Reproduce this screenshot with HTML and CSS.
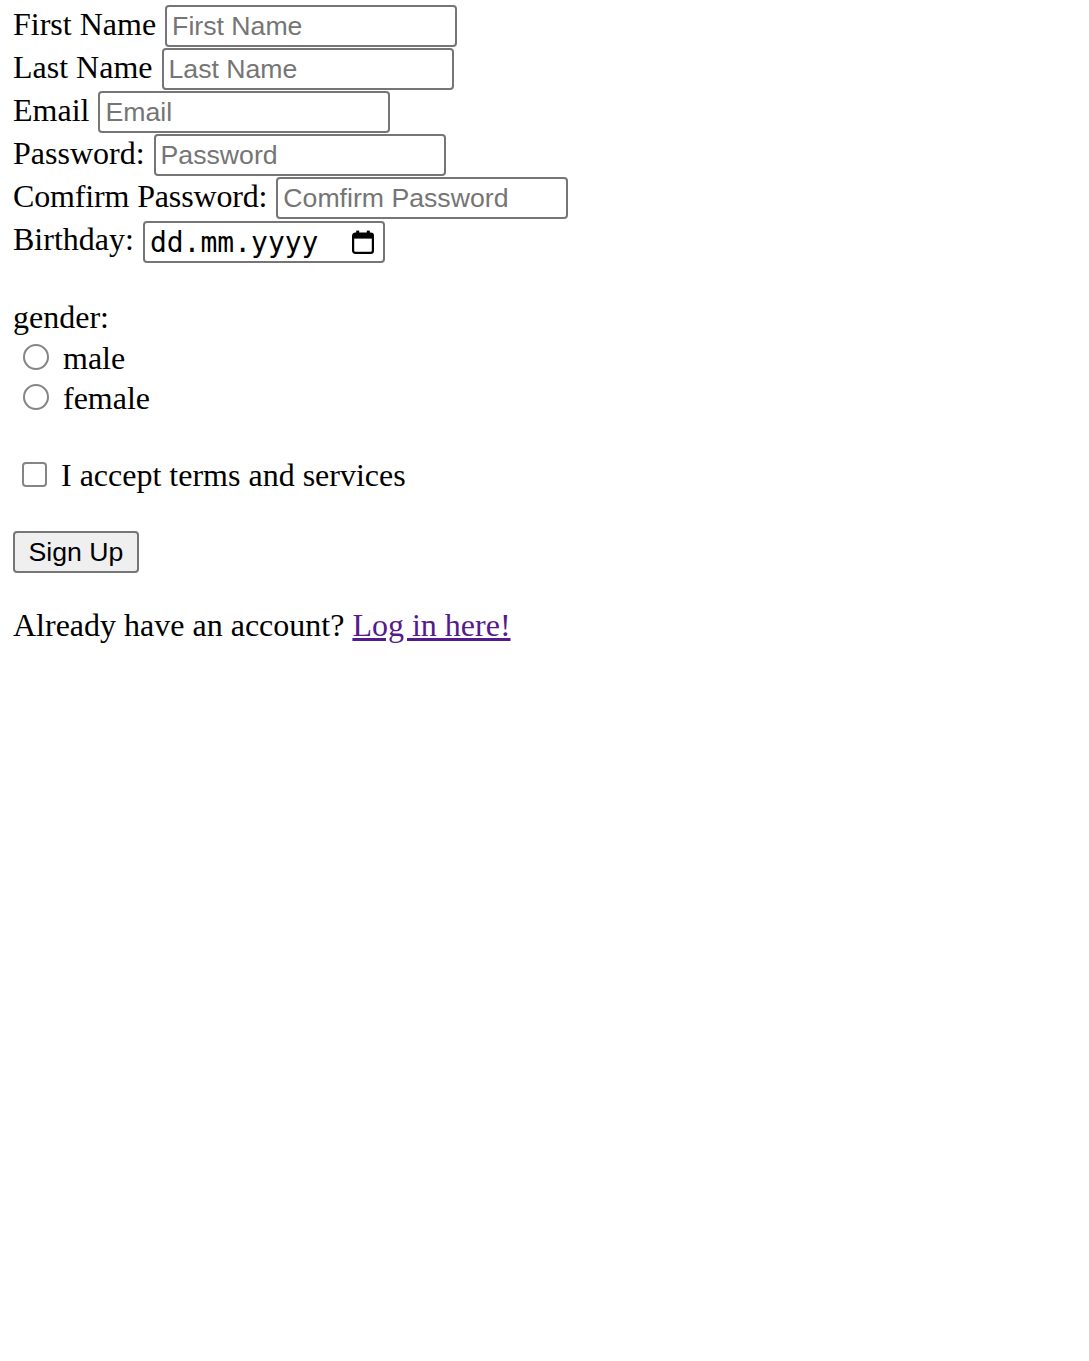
FILE: index.html
```html
<!DOCTYPE html>
<html lang="en">
<head>
<meta charset="utf-8">
<title>Sign Up</title>
<link rel="stylesheet" href="styles.css">
</head>
<body>
<form class="signup">
  <div class="row"><label class="lbl" for="fn">First Name</label><input class="field" id="fn" type="text" placeholder="First Name"></div>
  <div class="row"><label class="lbl" for="ln">Last Name</label><input class="field" id="ln" type="text" placeholder="Last Name"></div>
  <div class="row"><label class="lbl" for="em">Email</label><input class="field" id="em" type="text" placeholder="Email"></div>
  <div class="row"><label class="lbl" for="pw">Password:</label><input class="field" id="pw" type="password" placeholder="Password"></div>
  <div class="row"><label class="lbl narrow" for="cpw">Comfirm Password:</label><input class="field" id="cpw" type="password" placeholder="Comfirm Password"></div>
  <div class="row"><label class="lbl">Birthday:</label>
    <div class="date-field"><span class="date-text">dd.mm.yyyy</span>
      <svg class="cal" width="22" height="24" viewBox="0 0 22 24" aria-hidden="true">
        <rect x="1.1" y="3.6" width="19.8" height="19.3" rx="2.2" fill="none" stroke="#000" stroke-width="2.2"/>
        <rect x="1.1" y="3.6" width="19.8" height="5" fill="#000"/>
        <rect x="4.2" y="0.6" width="3" height="4" fill="#000"/>
        <rect x="14.8" y="0.6" width="3" height="4" fill="#000"/>
      </svg>
    </div>
  </div>

  <div class="gender-title">gender:</div>
  <div class="choice"><input class="radio" type="radio" name="gender" id="male"><label class="lbl-choice" for="male">male</label></div>
  <div class="choice"><input class="radio" type="radio" name="gender" id="female"><label class="lbl-choice" for="female">female</label></div>

  <div class="choice terms"><input class="check" type="checkbox" id="terms"><label class="lbl-choice" for="terms">I accept terms and services</label></div>

  <button class="btn" type="submit">Sign Up</button>
</form>
<p class="login">Already have an account? <a class="login-link" href="#">Log in here!</a></p>
</body>
</html>
```
FILE: styles.css
```css
html, body {
  background: #fff;
}
body {
  margin: 5px 13px;
  font-family: "Liberation Serif", "Times New Roman", serif;
  font-size: 32px;
  color: #000;
}
.signup {
  display: flex;
  flex-direction: column;
  align-items: flex-start;
}
.row {
  display: flex;
  align-items: flex-start;
  gap: 9px;
  height: 43px;
}
.lbl {
  line-height: 39px;
  white-space: nowrap;
}
.lbl.narrow {
  letter-spacing: -0.15px;
}
.field {
  box-sizing: border-box;
  width: 292px;
  height: 42px;
  margin: 0;
  padding: 0 5px;
  border: 2px solid #767676;
  border-radius: 4px;
  font-family: "Liberation Sans", Arial, sans-serif;
  font-size: 26.67px;
  color: #000;
  background: #fff;
  outline: none;
}
.field::placeholder {
  color: #757575;
  opacity: 1;
}
.date-field {
  box-sizing: border-box;
  width: 242px;
  height: 42px;
  margin-top: 1px;
  border: 2px solid #767676;
  border-radius: 4px;
  display: flex;
  align-items: center;
  justify-content: space-between;
  padding: 0 9px 0 5px;
}
.date-text {
  font-family: "DejaVu Sans Mono", "Liberation Mono", monospace;
  font-size: 28px;
  line-height: 1;
  position: relative;
  top: 1px;
}
.cal {
  display: block;
}
.gender-title {
  margin-top: 34px;
  line-height: 40px;
}
.choice {
  display: flex;
  align-items: center;
  gap: 14px;
  height: 40px;
  padding-left: 10px;
}
.choice .lbl-choice {
  line-height: 40px;
  position: relative;
  top: 1px;
}
.radio {
  appearance: none;
  -webkit-appearance: none;
  box-sizing: border-box;
  width: 26px;
  height: 26px;
  margin: 0;
  border: 2px solid #858585;
  border-radius: 50%;
  background: #fff;
}
.terms {
  margin-top: 37px;
  padding-left: 9px;
  gap: 14px;
}
.check {
  appearance: none;
  -webkit-appearance: none;
  box-sizing: border-box;
  width: 25px;
  height: 25px;
  margin: 0;
  border: 2px solid #858585;
  border-radius: 4px;
  background: #fff;
}
.btn {
  margin-top: 37px;
  box-sizing: border-box;
  height: 42px;
  padding: 0 13.5px;
  border: 2px solid #767676;
  border-radius: 4px;
  background: #efefef;
  font-family: "Liberation Sans", Arial, sans-serif;
  font-size: 26.67px;
  color: #000;
}
.login {
  margin: 32px 0 0;
  line-height: 40px;
}
.login-link {
  color: #551a8b;
  text-decoration: underline;
}
```
